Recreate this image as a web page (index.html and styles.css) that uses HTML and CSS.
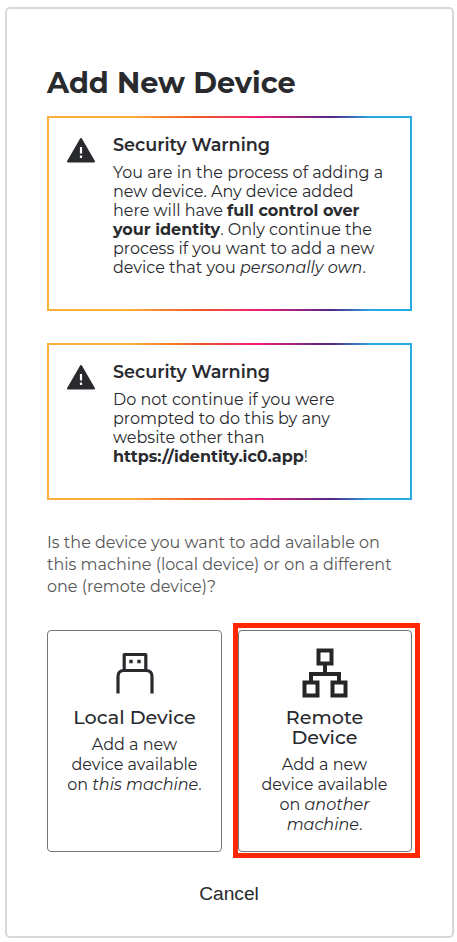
FILE: index.html
```html
<!DOCTYPE html>
<html lang="en">
<head>
<meta charset="utf-8">
<title>Add New Device</title>
<link rel="stylesheet" href="styles.css">
</head>
<body>
<main class="card">
  <h1>Add New Device</h1>
  <section class="warning warning-tall">
    <svg class="alert" viewBox="0 0 28 25"><path d="M14 1 27 23.500H1Z" fill="#292a2e" stroke="#292a2e" stroke-width="2" stroke-linejoin="round"/><path d="M14 9v6.500M14 17.500v2.500" stroke="#fff" stroke-width="2.200"/></svg>
    <div>
      <h2>Security Warning</h2>
      <p>You are in the process of adding a<br>new device. Any device added<br>here will have <strong>full control over<br>your identity</strong>. Only continue the<br>process if you want to add a new<br>device that you <em>personally own</em>.</p>
    </div>
  </section>
  <section class="warning">
    <svg class="alert" viewBox="0 0 28 25"><path d="M14 1 27 23.500H1Z" fill="#292a2e" stroke="#292a2e" stroke-width="2" stroke-linejoin="round"/><path d="M14 9v6.500M14 17.500v2.500" stroke="#fff" stroke-width="2.200"/></svg>
    <div>
      <h2>Security Warning</h2>
      <p>Do not continue if you were<br>prompted to do this by any<br>website other than<br><strong>https://identity.ic0.app</strong>!</p>
    </div>
  </section>
  <p class="question">Is the device you want to add available on<br>this machine (local device) or on a different<br>one (remote device)?</p>
  <div class="options">
    <button class="option">
      <svg class="icon" viewBox="0 0 50 50" fill="none" stroke="#292a2e"><path d="M14.200 22.500V6.500h21.600v16M8 45.500V28.500q0-6 6-6h22q6 0 6 6v17" stroke-width="3.200" stroke-linejoin="round"/><path d="M19.300 13.500h3.400M27.300 13.500h3.400" stroke-width="3.400"/></svg>
      <span class="title">Local Device</span>
      <span class="text">Add a new<br>device available<br>on <em>this machine</em>.</span>
    </button>
    <button class="option remote">
      <svg class="icon" viewBox="0 0 50 50" fill="none" stroke="#262626" stroke-width="4"><path d="M18.500 2.500h13v13h-13zM4.500 34.500h13v13h-13zM32.500 34.500h13v13h-13zM25 16v10M11 34v-8h28v8"/></svg>
      <span class="title">Remote<br>Device</span>
      <span class="text">Add a new<br>device available<br>on <em>another<br>machine</em>.</span>
    </button>
  </div>
  <button class="cancel">Cancel</button>
</main>
</body>
</html>
```
FILE: styles.css
```css
* { box-sizing: border-box; }
body { margin: 0; padding: 7px 3px 4px 5px; background: #fff; color: #292a2e; font-family: Montserrat, Inter, sans-serif; font-size: 16px; }
h1, h2, p { margin: 0; }
.card { height: 931px; border: 2px solid #d8d8d8; border-radius: 5px; padding: 55px 40px 0; display: flex; flex-direction: column; }
h1 { font-size: 28.8px; line-height: 38px; font-weight: 700; white-space: nowrap; margin-bottom: 14px; }
.warning { height: 157px; flex: none; display: flex; gap: 18px; padding: 17px 18px; border: 2px solid; border-image: linear-gradient(90deg, #fbb03b 22%, #f15a24 41%, #ed1e79 58%, #522785 78%, #29abe2 89%) 1; }
.warning-tall { height: 195px; margin-bottom: 32px; }
.alert { width: 28px; height: 25px; flex: none; margin-top: 3px; }
.warning h2 { font-size: 17.6px; line-height: 20px; font-weight: 600; margin-bottom: 8px; }
.warning p { line-height: 19px; white-space: nowrap; }
.question { margin-top: 32px; line-height: 22px; color: #585858; white-space: nowrap; }
.options { display: grid; grid-template-columns: 175px 174px; gap: 16px; height: 222px; margin-top: 32px; }
button { font: inherit; color: inherit; background: none; border: 0; padding: 0; }
.option { position: relative; border: 1px solid #76767a; border-radius: 4px; padding: 17px 0 0; display: flex; flex-direction: column; align-items: center; line-height: 20px; white-space: nowrap; }
.remote { padding-right: 1px; }
.icon { width: 50px; height: 50px; }
.title { font-size: 19.2px; font-weight: 500; margin: 9px 0 8px; }
.remote::after { content: ""; position: absolute; inset: -8px -9px -7px -6px; border: 5px solid #ff2600; }
.cancel { font-family: "Liberation Sans", sans-serif; font-size: 19.2px; line-height: 24px; margin: 30px 1px 0 0; align-self: center; }
```
